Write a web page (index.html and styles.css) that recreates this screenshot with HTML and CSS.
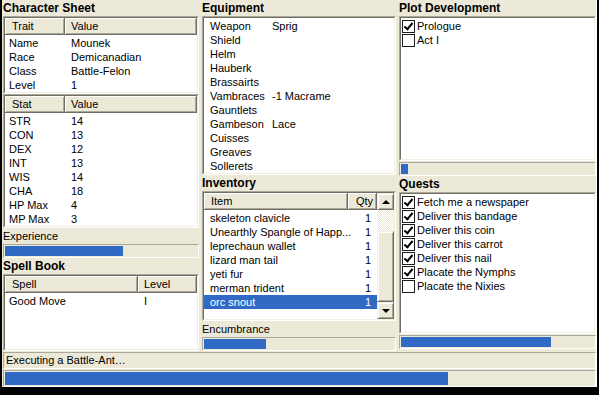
FILE: index.html
```html
<!DOCTYPE html>
<html lang="en">
<head>
    <meta charset="UTF-8">
    <title>Progress Quest</title>
    <link rel="stylesheet" href="styles.css">
</head>
<body>
    <div class="window">
        <div class="main">
            <!-- left column -->
            <div class="col col-left">
                <div class="caption">Character Sheet</div>
                <div class="lv traits">
                    <div class="lv-in">
                        <div class="lv-head">
                            <span class="h1">Trait</span>
                            <span class="h2">Value</span>
                        </div>
                        <div class="lv-body">
                            <div class="row"><span class="c1">Name</span><span class="c2">Mounek</span></div>
                            <div class="row"><span class="c1">Race</span><span class="c2">Demicanadian</span></div>
                            <div class="row"><span class="c1">Class</span><span class="c2">Battle-Felon</span></div>
                            <div class="row"><span class="c1">Level</span><span class="c2">1</span></div>
                        </div>
                    </div>
                </div>
                <div class="lv stats">
                    <div class="lv-in">
                        <div class="lv-head">
                            <span class="h1">Stat</span>
                            <span class="h2">Value</span>
                        </div>
                        <div class="lv-body">
                            <div class="row"><span class="c1">STR</span><span class="c2">14</span></div>
                            <div class="row"><span class="c1">CON</span><span class="c2">13</span></div>
                            <div class="row"><span class="c1">DEX</span><span class="c2">12</span></div>
                            <div class="row"><span class="c1">INT</span><span class="c2">13</span></div>
                            <div class="row"><span class="c1">WIS</span><span class="c2">14</span></div>
                            <div class="row"><span class="c1">CHA</span><span class="c2">18</span></div>
                            <div class="row"><span class="c1">HP Max</span><span class="c2">4</span></div>
                            <div class="row"><span class="c1">MP Max</span><span class="c2">3</span></div>
                        </div>
                    </div>
                </div>
                <div class="caption plain">Experience</div>
                <div class="bar"><div class="fill" style="width:118px"></div></div>
                <div class="caption">Spell Book</div>
                <div class="lv spells">
                    <div class="lv-in">
                        <div class="lv-head">
                            <span class="h1">Spell</span>
                            <span class="h2">Level</span>
                        </div>
                        <div class="lv-body">
                            <div class="row"><span class="c1">Good Move</span><span class="c2">I</span></div>
                        </div>
                    </div>
                </div>
            </div>

            <!-- middle column -->
            <div class="col col-mid">
                <div class="caption">Equipment</div>
                <div class="lv equip">
                    <div class="lv-in">
                        <div class="lv-body">
                            <div class="row"><span class="c1">Weapon</span><span class="c2">Sprig</span></div>
                            <div class="row"><span class="c1">Shield</span><span class="c2"></span></div>
                            <div class="row"><span class="c1">Helm</span><span class="c2"></span></div>
                            <div class="row"><span class="c1">Hauberk</span><span class="c2"></span></div>
                            <div class="row"><span class="c1">Brassairts</span><span class="c2"></span></div>
                            <div class="row"><span class="c1">Vambraces</span><span class="c2">-1 Macrame</span></div>
                            <div class="row"><span class="c1">Gauntlets</span><span class="c2"></span></div>
                            <div class="row"><span class="c1">Gambeson</span><span class="c2">Lace</span></div>
                            <div class="row"><span class="c1">Cuisses</span><span class="c2"></span></div>
                            <div class="row"><span class="c1">Greaves</span><span class="c2"></span></div>
                            <div class="row"><span class="c1">Sollerets</span><span class="c2"></span></div>
                        </div>
                    </div>
                </div>
                <div class="caption">Inventory</div>
                <div class="lv inventory">
                    <div class="lv-in inv-wrap">
                        <div class="inv-list">
                            <div class="lv-head">
                                <span class="h1">Item</span>
                                <span class="h2">Qty</span>
                            </div>
                            <div class="lv-body">
                                <div class="row"><span class="c1">skeleton clavicle</span><span class="c2">1</span></div>
                                <div class="row"><span class="c1">Unearthly Spangle of Happ...</span><span class="c2">1</span></div>
                                <div class="row"><span class="c1">leprechaun wallet</span><span class="c2">1</span></div>
                                <div class="row"><span class="c1">lizard man tail</span><span class="c2">1</span></div>
                                <div class="row"><span class="c1">yeti fur</span><span class="c2">1</span></div>
                                <div class="row"><span class="c1">merman trident</span><span class="c2">1</span></div>
                                <div class="row selected"><span class="c1">orc snout</span><span class="c2">1</span></div>
                            </div>
                        </div>
                        <div class="scrollbar">
                            <div class="sb-btn"><span class="arrow up"></span></div>
                            <div class="sb-track"></div>
                            <div class="sb-thumb"></div>
                            <div class="sb-btn"><span class="arrow down"></span></div>
                        </div>
                    </div>
                </div>
                <div class="caption plain">Encumbrance</div>
                <div class="bar"><div class="fill" style="width:62px"></div></div>
            </div>

            <!-- right column -->
            <div class="col col-right">
                <div class="caption">Plot Development</div>
                <div class="lv plot">
                    <div class="lv-in">
                        <div class="lv-body">
                            <div class="row check"><span class="cb on"></span>Prologue</div>
                            <div class="row check"><span class="cb"></span>Act I</div>
                        </div>
                    </div>
                </div>
                <div class="bar"><div class="fill" style="width:7px"></div></div>
                <div class="caption">Quests</div>
                <div class="lv quests">
                    <div class="lv-in">
                        <div class="lv-body">
                            <div class="row check"><span class="cb on"></span>Fetch me a newspaper</div>
                            <div class="row check"><span class="cb on"></span>Deliver this bandage</div>
                            <div class="row check"><span class="cb on"></span>Deliver this coin</div>
                            <div class="row check"><span class="cb on"></span>Deliver this carrot</div>
                            <div class="row check"><span class="cb on"></span>Deliver this nail</div>
                            <div class="row check"><span class="cb on"></span>Placate the Nymphs</div>
                            <div class="row check"><span class="cb"></span>Placate the Nixies</div>
                        </div>
                    </div>
                </div>
                <div class="bar"><div class="fill" style="width:150px"></div></div>
            </div>
        </div>

        <div class="status">Executing a Battle-Ant…</div>
        <div class="bar status-bar"><div class="fill" style="width:443px"></div></div>
    </div>
</body>
</html>
```

FILE: styles.css
```css
body {
    margin: 0;
    background-color: #000;
    font-family: "Liberation Sans", Arial, sans-serif;
    font-size: 11px;
    color: #000;
}
.window {
    width: 595px;
    height: 387px;
    margin-left: 2px;
    padding-left: 1px;
    box-sizing: border-box;
    background-color: #ece9d8;
    border-right: 1px solid #fff;
    border-bottom: 1px solid #fff;
}
.main {
    display: flex;
    gap: 3px;
    height: 351px;
}
.col {
    display: flex;
    flex-direction: column;
}
.col-left { width: 196px; }
.col-mid { width: 194px; }
.col-right { width: 197px; }

.caption {
    font-weight: bold;
    font-size: 12px;
    height: 16px;
    line-height: 16px;
    white-space: nowrap;
}
.caption.plain {
    font-weight: normal;
    font-size: 11px;
    line-height: 17px;
}

/* sunken list boxes */
.lv {
    border: 1px solid;
    border-color: #aca899 #fff #fff #aca899;
    box-sizing: border-box;
}
.lv-in {
    height: 100%;
    box-sizing: border-box;
    border: 1px solid;
    border-color: #716f64 #f1efe2 #f1efe2 #716f64;
    background-color: #fff;
    overflow: hidden;
}
.lv-head {
    display: flex;
    height: 17px;
    background-color: #ece9d8;
}
.lv-head span {
    height: 17px;
    line-height: 16px;
    padding-left: 7px;
    box-sizing: border-box;
    border-right: 1px solid #716f64;
    border-bottom: 1px solid #716f64;
    box-shadow: inset 1px 1px #fff, inset -1px -1px #aca899;
}
.lv-head .h1 { width: 60px; }
.lv-head .h2 { flex: 1; padding-left: 6px; }
.lv-body {
    padding-top: 1px;
}
.row {
    display: flex;
    height: 14px;
    line-height: 14px;
    white-space: nowrap;
}
.row .c1 {
    width: 56px;
    padding-left: 4px;
}
.row .c2 {
    padding-left: 6px;
}

.traits { height: 78px; }
.stats { height: 134px; }
.spells { flex: 1; }
.spells .lv-head .h1 { width: 133px; }
.spells .row .c1 { width: 129px; }

.equip { height: 160px; }
.equip .lv-body { padding-top: 1px; }
.equip .row .c1 { width: 56px; padding-left: 6px; }

.inventory { height: 130px; }
.inv-wrap { display: flex; }
.inv-list { flex: 1; }
.inventory .lv-head .h1 { width: 144px; }
.inventory .lv-head .h2 { padding-left: 8px; }
.inventory .row .c1 { width: 138px; padding-left: 6px; }
.inventory .row .c2 { flex: 1; text-align: right; padding: 0 6px 0 0; }
.row.selected {
    background-color: #316ac5;
    color: #fff;
}

.scrollbar {
    width: 17px;
    display: flex;
    flex-direction: column;
}
.sb-btn, .sb-thumb {
    background-color: #ece9d8;
    box-sizing: border-box;
    border: 1px solid;
    border-color: #f1efe2 #716f64 #716f64 #f1efe2;
    box-shadow: inset 1px 1px #fff, inset -1px -1px #aca899;
}
.sb-btn {
    height: 17px;
    display: flex;
    align-items: center;
    justify-content: center;
}
.sb-track {
    height: 21px;
    background-color: #ece9d8;
    background-image: repeating-conic-gradient(#fff 0 25%, #ece9d8 0 50%);
    background-size: 2px 2px;
}
.sb-thumb { flex: 1; }
.arrow {
    width: 0;
    height: 0;
    border-left: 4px solid transparent;
    border-right: 4px solid transparent;
}
.arrow.up { border-bottom: 4px solid #000; }
.arrow.down { border-top: 4px solid #000; }

.plot { height: 145px; }
.quests { height: 142px; margin-top: 0; }
.row.check {
    padding-left: 1px;
    align-items: center;
}
.cb {
    width: 13px;
    height: 13px;
    box-sizing: border-box;
    border: 1px solid #1c1c1c;
    background-color: #fff;
    margin-right: 2px;
    position: relative;
}
.cb.on::after {
    content: "";
    position: absolute;
    left: 3px;
    top: 0px;
    width: 3px;
    height: 7px;
    border-right: 2px solid #000;
    border-bottom: 2px solid #000;
    transform: rotate(40deg);
}

/* progress bars */
.bar {
    height: 14px;
    border: 1px solid;
    border-color: #aca899 #fff #fff #aca899;
    padding: 1px;
    box-sizing: border-box;
}
.fill {
    height: 100%;
    background-color: #316ac5;
}
.col-right .bar { margin-top: 1px; }

.status {
    height: 17px;
    line-height: 15px;
    margin-top: 1px;
    padding-left: 2px;
    border: 1px solid;
    border-color: #aca899 #fff #fff #aca899;
    box-sizing: border-box;
    white-space: nowrap;
}
.status-bar {
    height: 17px;
    margin-top: 1px;
}
```
